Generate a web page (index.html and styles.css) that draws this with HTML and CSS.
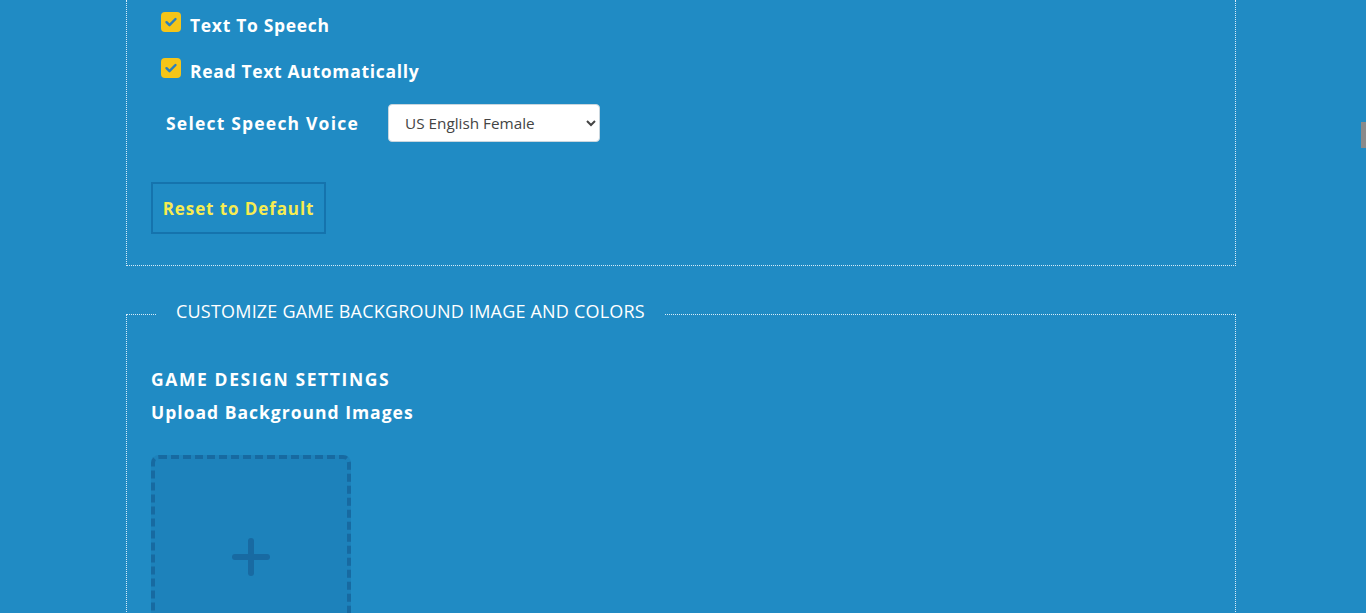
FILE: index.html
```html
<!DOCTYPE html>
<html lang="en">
<head>
<meta charset="utf-8">
<title>Settings</title>
<link rel="stylesheet" href="styles.css">
</head>
<body>
<div class="page">
  <div class="container">
    <fieldset class="panel panel-open">
      <label class="check-row">
        <span class="checkbox"><svg viewBox="0 0 20 20" width="20" height="20"><path d="M5.5 10.2l3 3 6-6.2" fill="none" stroke="#2a7fbd" stroke-width="2.4" stroke-linecap="round" stroke-linejoin="round"/></svg></span>
        <span class="check-text">Text To Speech</span>
      </label>
      <label class="check-row">
        <span class="checkbox"><svg viewBox="0 0 20 20" width="20" height="20"><path d="M5.5 10.2l3 3 6-6.2" fill="none" stroke="#2a7fbd" stroke-width="2.4" stroke-linecap="round" stroke-linejoin="round"/></svg></span>
        <span class="check-text">Read Text Automatically</span>
      </label>
      <div class="voice-row">
        <span class="voice-label">Select Speech Voice</span>
        <select class="voice-select">
          <option>US English Female</option>
          <option>US English Male</option>
          <option>UK English Female</option>
          <option>UK English Male</option>
        </select>
      </div>
      <button class="reset-btn" type="button">Reset to Default</button>
    </fieldset>

    <fieldset class="panel panel-bg">
      <legend class="panel-legend">CUSTOMIZE GAME BACKGROUND IMAGE AND COLORS</legend>
      <h3 class="section-title">GAME DESIGN SETTINGS</h3>
      <h4 class="section-sub">Upload Background Images</h4>
      <div class="upload-box">
        <span class="plus"></span>
      </div>
    </fieldset>
  </div>
</div>
<div class="scroll-thumb"></div>
</body>
</html>
```

FILE: styles.css
```css
html, body {
  margin: 0;
  padding: 0;
}
body {
  background: #208bc4;
  font-family: "Open Sans", "Lato", Arial, sans-serif;
  color: #ffffff;
  overflow: hidden;
  height: 613px;
}
.page {
  width: 1362px;
}
.container {
  width: 1110px;
  margin: 0 auto;
}
.panel {
  margin: 0;
  border: 1px dotted rgba(225, 242, 252, 0.95);
  padding: 0 24px;
  min-width: 0;
}
.panel-open {
  border-top: none;
  padding-top: 12px;
  padding-bottom: 31px;
}
.check-row {
  display: flex;
  align-items: center;
  height: 20px;
  margin-left: 10px;
  margin-bottom: 26px;
  cursor: pointer;
}
.checkbox {
  width: 20px;
  height: 20px;
  border-radius: 4px;
  background: #f5c518;
  display: flex;
  align-items: center;
  justify-content: center;
}
.check-text {
  margin-left: 9px;
  margin-top: 6px;
  font-size: 17.5px;
  font-weight: 700;
  letter-spacing: 0.68px;
}
.voice-row {
  display: flex;
  align-items: center;
  margin-top: 25px;
  margin-left: 15px;
}
.voice-label {
  font-size: 17.5px;
  font-weight: 700;
  letter-spacing: 1.2px;
  width: 222px;
  margin-top: -1px;
}
.voice-select {
  width: 212px;
  height: 38px;
  border: 1px solid #c9d6de;
  border-radius: 4px;
  background: #ffffff;
  color: #444444;
  font-family: "Open Sans", Arial, sans-serif;
  font-size: 15.3px;
  padding: 0 10px 0 12px;
}
.reset-btn {
  display: block;
  margin-top: 40px;
  width: 175px;
  height: 52px;
  background: transparent;
  border: 2px solid #1573ad;
  color: #f7ec50;
  font-family: "Open Sans", "Lato", Arial, sans-serif;
  font-size: 17px;
  font-weight: 700;
  letter-spacing: 0.9px;
  padding: 0;
  cursor: pointer;
}
.panel-bg {
  margin-top: 33px;
  padding-top: 39px;
  padding-bottom: 0;
  height: 400px;
}
.panel-legend {
  margin-left: 6px;
  padding: 0 19px 6px;
  font-size: 18px;
  line-height: 24px;
  font-weight: 400;
  letter-spacing: 0.2px;
}
.section-title {
  margin: 0;
  font-size: 17.5px;
  font-weight: 700;
  letter-spacing: 1.6px;
  line-height: 22px;
}
.section-sub {
  margin: 11px 0 0;
  font-size: 17.5px;
  font-weight: 700;
  letter-spacing: 1px;
  line-height: 22px;
}
.upload-box {
  margin-top: 32px;
  width: 200px;
  height: 204px;
  box-sizing: border-box;
  border: 4px dashed #176aa1;
  border-radius: 8px;
  background: #1d82bb;
  display: flex;
  align-items: center;
  justify-content: center;
}
.plus {
  position: relative;
  width: 38px;
  height: 38px;
}
.plus::before,
.plus::after {
  content: "";
  position: absolute;
  background: #186aa2;
  border-radius: 3px;
}
.plus::before {
  left: 0;
  top: 16px;
  width: 38px;
  height: 6px;
}
.plus::after {
  top: 0;
  left: 16px;
  width: 6px;
  height: 38px;
}
.scroll-thumb {
  position: fixed;
  right: 0;
  top: 122px;
  width: 5px;
  height: 26px;
  background: #8a8a8a;
}
```
